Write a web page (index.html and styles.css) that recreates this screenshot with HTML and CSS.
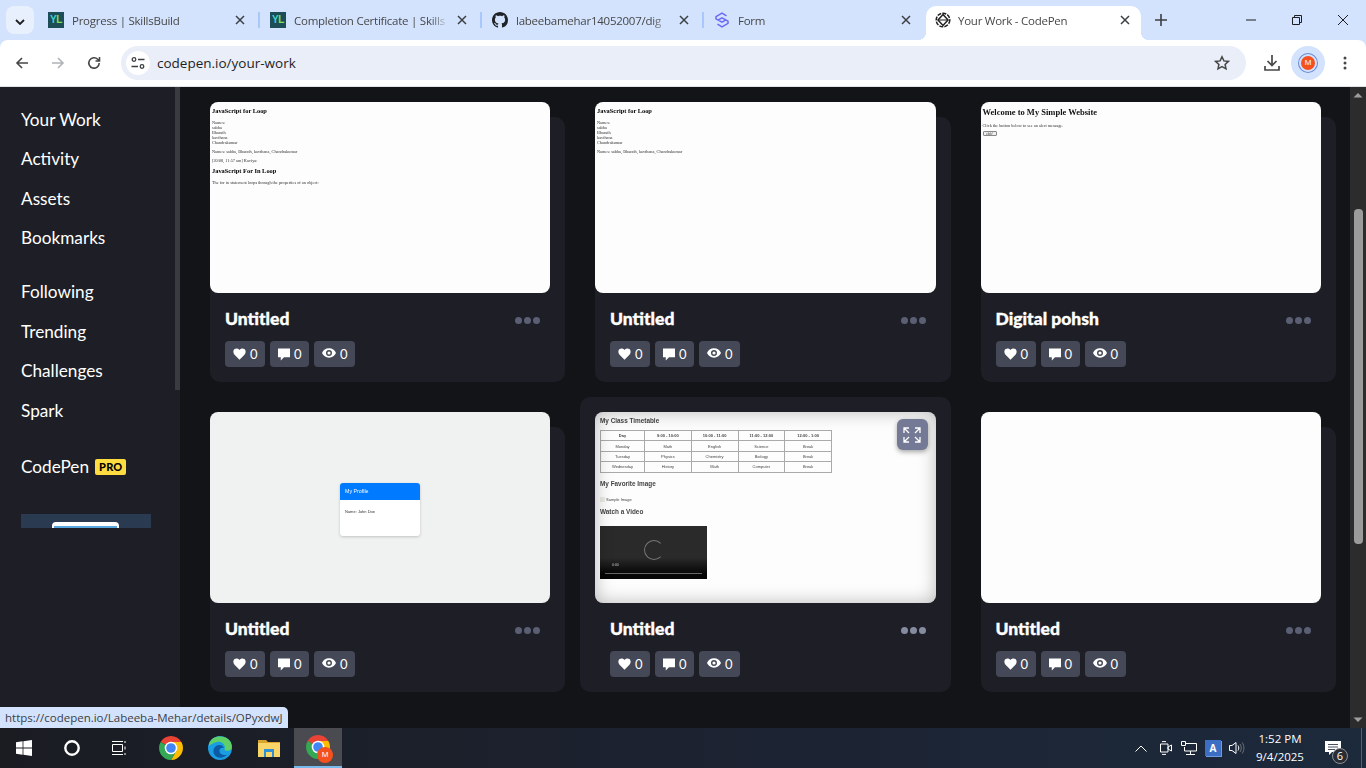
FILE: index.html
```html
<!DOCTYPE html>
<html lang="en">
<head>
    <meta charset="UTF-8">
    <meta name="viewport" content="width=device-width, initial-scale=1.0">
    <title>Your Work - CodePen</title>
    <link rel="stylesheet" href="styles.css">
</head>
<body>
    <svg class="sprites" width="0" height="0">
        <symbol id="i-heart" viewBox="0 0 14 13"><path d="M7 12.6 1.6 7.2C-.2 5.4 0 2.6 1.7 1.2 3.4-.1 5.7.3 7 2.1 8.3.3 10.6-.1 12.3 1.2 14 2.6 14.2 5.4 12.4 7.200z"/></symbol>
        <symbol id="i-comment" viewBox="0 0 13 13"><path d="M0 0h13v9.5H6.500L3 13V9.500H0z"/></symbol>
        <symbol id="i-eye" viewBox="0 0 15 10"><path fill-rule="evenodd" d="M7.5 0C11 0 13.8 2.2 15 5c-1.2 2.8-4 5-7.500 5S1.200 7.800 0 5C1.200 2.200 4 0 7.500 0zm0 1.800a3.200 3.200 0 1 0 0 6.400 3.200 3.200 0 0 0 0-6.400zm0 1.500a1.700 1.700 0 1 1 0 3.400 1.700 1.700 0 0 1 0-3.400z"/></symbol>
        <symbol id="i-close" viewBox="0 0 10 10"><path d="M1 1l8 8M9 1 1 9" fill="none" stroke="currentColor" stroke-width="1.5"/></symbol>
        <symbol id="i-chrome" viewBox="4 4 40 40">
            <path fill="#ea4335" d="M15.34 19 6.68 14a20 20 0 0 1 34.64 0H24z"/>
            <path fill="#fbbc04" d="M24 14h17.32A20 20 0 0 1 24 44l8.66-15z"/>
            <path fill="#34a853" d="M32.66 29 24 44A20 20 0 0 1 6.68 14l8.66 5z"/>
            <circle cx="24" cy="24" r="10.5" fill="#fff"/>
            <circle cx="24" cy="24" r="8" fill="#4285f4"/>
        </symbol>
    </svg>

    <header class="tabstrip">
        <button class="tab-search"><svg width="10" height="6" viewBox="0 0 10 6"><path d="M1 1l4 4 4-4" fill="none" stroke="#1f1f1f" stroke-width="1.8"/></svg></button>
        <div class="tabs">
            <div class="tab">
                <span class="favicon-yl"><b>Y</b><i>L</i></span>
                <span class="tab-title">Progress | SkillsBuild</span>
                <svg class="tab-close"><use href="#i-close"/></svg>
            </div>
            <div class="tab">
                <span class="favicon-yl"><b>Y</b><i>L</i></span>
                <span class="tab-title">Completion Certificate | Skills</span>
                <svg class="tab-close"><use href="#i-close"/></svg>
            </div>
            <div class="tab">
                <svg class="favicon" viewBox="0 0 16 16"><path fill="#1f2328" d="M8 0C3.58 0 0 3.58 0 8c0 3.54 2.29 6.53 5.47 7.59.4.07.55-.17.55-.38 0-.19-.01-.82-.01-1.49-2.01.37-2.53-.49-2.69-.94-.09-.23-.48-.94-.82-1.13-.28-.15-.68-.52-.01-.53.63-.01 1.08.58 1.23.82.72 1.21 1.87.87 2.33.66.07-.52.28-.87.51-1.07-1.78-.2-3.64-.89-3.64-3.95 0-.87.31-1.59.82-2.15-.08-.2-.36-1.02.08-2.12 0 0 .67-.21 2.2.82.64-.18 1.32-.27 2-.27.68 0 1.36.09 2 .27 1.53-1.04 2.2-.82 2.2-.82.44 1.1.16 1.92.08 2.12.51.56.82 1.27.82 2.15 0 3.07-1.87 3.75-3.65 3.95.29.25.54.73.54 1.48 0 1.07-.01 1.93-.01 2.2 0 .21.15.46.55.38A8.013 8.013 0 0 0 16 8c0-4.42-3.58-8-8-8z"/></svg>
                <span class="tab-title">labeebamehar14052007/dig</span>
                <svg class="tab-close"><use href="#i-close"/></svg>
            </div>
            <div class="tab tab-last">
                <svg class="favicon" viewBox="0 0 16 16"><path d="M12.5 3.8 8 1.2 2 4.6v2.200L8 10.200l4-2.300M3.500 12.200 8 14.800l6-3.400V9.200L8 5.800 4 8.100" fill="none" stroke="#6a6af4" stroke-width="1.5"/></svg>
                <span class="tab-title">Form</span>
                <svg class="tab-close"><use href="#i-close"/></svg>
            </div>
            <div class="tab tab-active">
                <svg class="favicon" viewBox="0 0 16 16"><g fill="none" stroke="#1f1f1f" stroke-width="1.5"><circle cx="8" cy="8" r="6.8" stroke-dasharray="4 1.2"/><path d="M8 2.500 13 8l-5 5.500L3 8z"/><path d="M3 8h10" stroke-width="1"/></g></svg>
                <span class="tab-title">Your Work - CodePen</span>
                <svg class="tab-close"><use href="#i-close"/></svg>
            </div>
            <svg class="new-tab" width="12" height="12" viewBox="0 0 12 12"><path d="M6 0v12M0 6h12" stroke="#3c3f43" stroke-width="1.6"/></svg>
        </div>
        <div class="window-controls">
            <svg width="10" height="10" viewBox="0 0 10 10"><path d="M0 5h10" stroke="#1f1f1f"/></svg>
            <svg width="10" height="10" viewBox="0 0 10 10"><path d="M.5 2.500h7v7h-7zM2.500 2.500v-2h7v7h-2" fill="none" stroke="#1f1f1f"/></svg>
            <svg width="10" height="10" viewBox="0 0 10 10"><path d="M0 0l10 10M10 0 0 10" stroke="#1f1f1f"/></svg>
        </div>
    </header>

    <div class="toolbar">
        <svg class="tool-icon" viewBox="0 0 16 16"><path d="M14 8H3M8 3 3 8l5 5" fill="none" stroke="#474747" stroke-width="1.6"/></svg>
        <svg class="tool-icon" viewBox="0 0 16 16"><path d="M2 8h11M8 3l5 5-5 5" fill="none" stroke="#b0b3b8" stroke-width="1.6"/></svg>
        <svg class="tool-icon" viewBox="0 0 16 16"><path d="M13.200 8a5.200 5.200 0 1 1-1.500-3.700L13.500 6M13.500 2v4h-4" fill="none" stroke="#474747" stroke-width="1.6"/></svg>
        <div class="omnibox">
            <span class="site-info"><svg width="14" height="12" viewBox="0 0 14 12"><g fill="none" stroke="#3c3f43" stroke-width="1.3"><circle cx="3" cy="2.500" r="1.8"/><path d="M7 2.500h6.500M.5 9.500H7"/><circle cx="11" cy="9.500" r="1.8"/></g></svg></span>
            <span class="url">codepen.io/your-work</span>
            <svg class="star" width="16" height="16" viewBox="0 0 16 16"><path d="M8 1.800l1.900 4.100 4.500.5-3.300 3 .9 4.400L8 11.600l-4 2.200.9-4.400-3.300-3 4.500-.5z" fill="none" stroke="#474747" stroke-width="1.5"/></svg>
        </div>
        <svg class="download" width="18" height="18" viewBox="0 0 18 18"><path d="M9 1v10M4.500 7 9 11.500 13.500 7M2 12v4h14v-4" fill="none" stroke="#474747" stroke-width="1.7"/></svg>
        <span class="profile"><span class="avatar">M</span></span>
        <svg class="menu" width="4" height="14" viewBox="0 0 4 14"><circle cx="2" cy="2" r="1.5" fill="#474747"/><circle cx="2" cy="7" r="1.5" fill="#474747"/><circle cx="2" cy="12" r="1.5" fill="#474747"/></svg>
    </div>

    <div class="viewport">
        <aside class="sidebar">
            <nav class="side-group">
                <a>Your Work</a>
                <a>Activity</a>
                <a>Assets</a>
                <a>Bookmarks</a>
            </nav>
            <nav class="side-group side-group-wide">
                <a>Following</a>
                <a>Trending</a>
                <a>Challenges</a>
                <a>Spark</a>
            </nav>
            <nav class="side-group">
                <a>CodePen <span class="pro">PRO</span></a>
            </nav>
            <div class="promo"><span class="promo-card"></span></div>
        </aside>

        <main class="content">
            <div class="pen-grid">
                <article class="pen">
                    <div class="screen">
                        <div class="doc serif">
                            <h3>JavaScript for Loop</h3>
                            <p>Names:<br>sabha<br>Bharath<br>kavthana<br>Chandrakumar</p>
                            <p>Names: sabha, Bharath, kavthana, Chandrakumar</p>
                            <p>[20/08, 11:57 am] Kaviya:</p>
                            <h3>JavaScript For In Loop</h3>
                            <p>The for in statement loops through the properties of an object:</p>
                        </div>
                    </div>
                    <div class="pen-info">
                        <div class="pen-head"><h2>Untitled</h2><span class="dots"><i></i><i></i><i></i></span></div>
                        <div class="stats">
                            <span class="stat"><svg class="ic-heart"><use href="#i-heart"/></svg>0</span>
                            <span class="stat"><svg class="ic-comment"><use href="#i-comment"/></svg>0</span>
                            <span class="stat"><svg class="ic-eye"><use href="#i-eye"/></svg>0</span>
                        </div>
                    </div>
                </article>

                <article class="pen">
                    <div class="screen">
                        <div class="doc serif">
                            <h3>JavaScript for Loop</h3>
                            <p>Names:<br>sabha<br>Bharath<br>kavthana<br>Chandrakumar</p>
                            <p>Names: sabha, Bharath, kavthana, Chandrakumar</p>
                        </div>
                    </div>
                    <div class="pen-info">
                        <div class="pen-head"><h2>Untitled</h2><span class="dots"><i></i><i></i><i></i></span></div>
                        <div class="stats">
                            <span class="stat"><svg class="ic-heart"><use href="#i-heart"/></svg>0</span>
                            <span class="stat"><svg class="ic-comment"><use href="#i-comment"/></svg>0</span>
                            <span class="stat"><svg class="ic-eye"><use href="#i-eye"/></svg>0</span>
                        </div>
                    </div>
                </article>

                <article class="pen">
                    <div class="screen">
                        <div class="doc serif">
                            <h1>Welcome to My Simple Website</h1>
                            <p>Click the button below to see an alert message.</p>
                            <span class="fake-btn">click!</span>
                        </div>
                    </div>
                    <div class="pen-info">
                        <div class="pen-head"><h2>Digital pohsh</h2><span class="dots"><i></i><i></i><i></i></span></div>
                        <div class="stats">
                            <span class="stat"><svg class="ic-heart"><use href="#i-heart"/></svg>0</span>
                            <span class="stat"><svg class="ic-comment"><use href="#i-comment"/></svg>0</span>
                            <span class="stat"><svg class="ic-eye"><use href="#i-eye"/></svg>0</span>
                        </div>
                    </div>
                </article>

                <article class="pen">
                    <div class="screen screen-profile">
                        <div class="profile-card">
                            <div class="profile-head">My Profile</div>
                            <div class="profile-body">Name: John Doe</div>
                        </div>
                    </div>
                    <div class="pen-info">
                        <div class="pen-head"><h2>Untitled</h2><span class="dots"><i></i><i></i><i></i></span></div>
                        <div class="stats">
                            <span class="stat"><svg class="ic-heart"><use href="#i-heart"/></svg>0</span>
                            <span class="stat"><svg class="ic-comment"><use href="#i-comment"/></svg>0</span>
                            <span class="stat"><svg class="ic-eye"><use href="#i-eye"/></svg>0</span>
                        </div>
                    </div>
                </article>

                <article class="pen pen-hover">
                    <div class="screen screen-timetable">
                        <div class="timetable-inner">
                            <h4>My Class Timetable</h4>
                            <table>
                                <tr><th>Day</th><th>9:00 - 10:00</th><th>10:00 - 11:00</th><th>11:00 - 12:00</th><th>12:00 - 1:00</th></tr>
                                <tr><td>Monday</td><td>Math</td><td>English</td><td>Science</td><td>Break</td></tr>
                                <tr><td>Tuesday</td><td>Physics</td><td>Chemistry</td><td>Biology</td><td>Break</td></tr>
                                <tr><td>Wednesday</td><td>History</td><td>Math</td><td>Computer</td><td>Break</td></tr>
                            </table>
                            <h4 class="gap-fav">My Favorite Image</h4>
                            <p class="alt-img">Sample Image</p>
                            <h4 class="gap-video">Watch a Video</h4>
                            <div class="video">
                                <span class="spinner"></span>
                                <span class="video-time">0:00</span>
                                <span class="video-bar"></span>
                            </div>
                        </div>
                        <span class="expand">
                            <svg width="18" height="16" viewBox="0 0 18 16"><path d="M1 6V1h5M1 1l5 5M17 6V1h-5M17 1l-5 5M1 10v5h5M1 15l5-5M17 10v5h-5M17 15l-5-5" fill="none" stroke="#fff" stroke-width="1.3"/></svg>
                        </span>
                    </div>
                    <div class="pen-info">
                        <div class="pen-head"><h2>Untitled</h2><span class="dots"><i></i><i></i><i></i></span></div>
                        <div class="stats">
                            <span class="stat"><svg class="ic-heart"><use href="#i-heart"/></svg>0</span>
                            <span class="stat"><svg class="ic-comment"><use href="#i-comment"/></svg>0</span>
                            <span class="stat"><svg class="ic-eye"><use href="#i-eye"/></svg>0</span>
                        </div>
                    </div>
                </article>

                <article class="pen">
                    <div class="screen"></div>
                    <div class="pen-info">
                        <div class="pen-head"><h2>Untitled</h2><span class="dots"><i></i><i></i><i></i></span></div>
                        <div class="stats">
                            <span class="stat"><svg class="ic-heart"><use href="#i-heart"/></svg>0</span>
                            <span class="stat"><svg class="ic-comment"><use href="#i-comment"/></svg>0</span>
                            <span class="stat"><svg class="ic-eye"><use href="#i-eye"/></svg>0</span>
                        </div>
                    </div>
                </article>
            </div>
        </main>

        <div class="scrollbar">
            <svg width="16" height="17" viewBox="0 0 16 17"><path d="M3.5 10.5 8 6l4.500 4.500z" fill="#9d9d9d"/></svg>
            <span class="thumb"></span>
            <svg class="arrow-down" width="16" height="17" viewBox="0 0 16 17"><path d="M3.5 6.5 8 11l4.500-4.500z" fill="#9d9d9d"/></svg>
        </div>

        <div class="status-url">https://codepen.io/Labeeba-Mehar/details/OPyxdwJ</div>
    </div>

    <footer class="taskbar">
        <div class="task-left">
            <span class="task-item"><svg width="16" height="16" viewBox="0 0 16 16"><path fill="#fff" d="M0 2.200 6.600 1.300v6.300H0zM7.400 1.200 16 0v7.600H7.400zM0 8.400h6.600v6.300L0 13.800zM7.400 8.400H16V16l-8.600-1.200z"/></svg></span>
            <span class="task-item"><svg width="16" height="16" viewBox="0 0 16 16"><circle cx="8" cy="8" r="6.700" fill="none" stroke="#fff" stroke-width="2.400"/></svg></span>
            <span class="task-item"><svg width="16" height="16" viewBox="0 0 16 16"><path d="M.5 4.500h10v7H.5zM0 1.500h11M0 14.500h11M13 1v2M13 6.500v3M13 13v2" fill="none" stroke="#fff"/></svg></span>
            <span class="task-item task-app task-first"><svg width="24" height="24"><use href="#i-chrome"/></svg></span>
            <span class="task-item task-app">
                <svg width="24" height="24" viewBox="0 0 24 24">
                    <circle cx="12" cy="12" r="12" fill="#1b9de2"/>
                    <path fill="#5fd068" d="M2 6C5 0 14-1 20 3c3 2 4.500 6 3.500 10-1.500 2-6 2.500-7 .5C18 9 14 5 9 6 6 6.500 3.500 8 1 10c0-1.500.3-3 1-4z"/>
                    <path fill="#0c59a4" d="M9 21c-4-2-5-8-1-11 3-2 7-1 8 2-3-1-5 1-4.500 3.500.5 3 4 4.500 8 3-3 3-7 4-10.500 2.500z"/>
                </svg>
            </span>
            <span class="task-item task-app">
                <svg width="22" height="18" viewBox="0 0 22 18">
                    <path fill="#d9a42b" d="M0 1h8l2 2h12v3H0z"/>
                    <path fill="#f8d568" d="M0 4h22v14H0z"/>
                    <path fill="#2d8fd5" d="M6 10h10v8h-2v-5H8v5H6z"/>
                </svg>
            </span>
            <span class="task-item task-active">
                <svg width="24" height="24"><use href="#i-chrome"/></svg>
                <span class="task-badge">M</span>
            </span>
        </div>
        <div class="tray">
            <span class="tray-icon"><svg width="12" height="7" viewBox="0 0 12 7"><path d="M.5 6.500 6 1l5.500 5.500" fill="none" stroke="#fff"/></svg></span>
            <span class="tray-icon"><svg width="13" height="14" viewBox="0 0 13 14"><path d="M1.500 3h7.500v8H1.500zM9 6l3.500-2v6L9 8zM3 .6h4M3 13.400h4" fill="none" stroke="#fff"/></svg></span>
            <span class="tray-icon"><svg width="16" height="14" viewBox="0 0 16 14"><path d="M4.500 2.500H15.500V10H3.500V6M9.500 10v3M5 13.500h9M.5.500h4v4h-4z" fill="none" stroke="#fff"/></svg></span>
            <span class="tray-icon"><span class="lang">A</span></span>
            <span class="tray-icon"><svg width="16" height="14" viewBox="0 0 16 14"><path d="M.5 4.500h2.500L7 1.500v11l-4-3H.5z" fill="none" stroke="#fff"/><path d="M9 4.500c1 1.500 1 3.500 0 5" fill="none" stroke="#fff"/><path d="M11 3c1.700 2.500 1.700 5.500 0 8M13.200 1.500c2.300 3.500 2.300 7.500 0 11" fill="none" stroke="#6d7178"/></svg></span>
            <div class="clock"><span>1:52 PM</span><span>9/4/2025</span></div>
            <span class="notify">
                <svg width="16" height="15" viewBox="0 0 16 15"><path fill="#fff" d="M0 0h16v11H7l-3 3v-3H0z"/><path d="M3 3.500h10M3 6h10M3 8.500h7" stroke="#1a2230" stroke-width=".8"/></svg>
                <span class="notify-count">6</span>
            </span>
        </div>
    </footer>
</body>
</html>
```

FILE: styles.css
```css
/* page frame */
* {
    box-sizing: border-box;
}

body {
    margin: 0;
    width: 1366px;
    height: 768px;
    display: flex;
    flex-direction: column;
    overflow: hidden;
    font-family: "Lato", sans-serif;
    background-color: #d3e3fd;
}

.sprites {
    position: absolute;
}

/* browser tabs */
.tabstrip {
    height: 40px;
    display: flex;
    background-color: #d3e3fd;
    flex-shrink: 0;
}

.tab-search {
    width: 28px;
    height: 28px;
    margin: 6px 4px 0 6px;
    padding: 0;
    border: none;
    border-radius: 8px;
    background-color: #e9f0fd;
}

.tabs {
    display: flex;
    align-items: flex-end;
    flex: 1;
}

.tab {
    width: 222px;
    height: 34px;
    display: flex;
    align-items: center;
    padding: 0 15px 6px 10px;
    position: relative;
    color: #474747;
    font-family: "Open Sans", sans-serif;
    font-size: 11.5px;
    letter-spacing: -0.25px;
}

.tab::after {
    content: '';
    position: absolute;
    right: 0;
    top: 6px;
    width: 2px;
    height: 16px;
    background-color: #a8c7fa;
}

.tab-last::after {
    display: none;
}

.tab-active {
    width: 215px;
    background-color: #fff;
    border-radius: 10px 10px 0 0;
    padding: 0 11px 6px 9px;
}

/* concave corners at the foot of the open tab */
.tab-active::before,
.tab-active::after {
    content: '';
    position: absolute;
    top: auto;
    bottom: 0;
    width: 8px;
    height: 8px;
    background-color: transparent;
}

.tab-active::before {
    left: -8px;
    background-image: radial-gradient(circle at 0 0, transparent 8px, #fff 8px);
}

.tab-active::after {
    right: -8px;
    background-image: radial-gradient(circle at 100% 0, transparent 8px, #fff 8px);
}

.favicon,
.favicon-yl {
    width: 16px;
    height: 16px;
    flex-shrink: 0;
    margin-right: 8px;
}

.tab-active .favicon {
    margin-right: 7px;
}

.favicon-yl {
    display: flex;
    align-items: center;
    justify-content: center;
    background-color: #1d4e57;
    font-family: "Liberation Sans", sans-serif;
    font-size: 10px;
    line-height: 16px;
    letter-spacing: -0.5px;
}

.favicon-yl b {
    color: #3fd0d4;
}

.favicon-yl i {
    color: #7fe05a;
    font-style: normal;
    font-weight: bold;
}

.tab-title {
    flex: 1;
    overflow: hidden;
    white-space: nowrap;
    -webkit-mask-image: linear-gradient(to right, #000 88%, transparent);
    mask-image: linear-gradient(to right, #000 88%, transparent);
}

.tab-close {
    width: 10px;
    height: 10px;
    margin-left: 8px;
    flex-shrink: 0;
    color: #3c3f43;
}

.new-tab {
    margin: 0 0 14px 14px;
}

.window-controls {
    display: flex;
    align-items: center;
    gap: 36px;
    padding-right: 18px;
}

.window-controls svg {
    display: block;
}

/* browser toolbar */
.toolbar {
    height: 47px;
    display: flex;
    align-items: center;
    flex-shrink: 0;
    padding: 0 0 1px 14px;
    background-color: #fff;
    border-bottom: 1px solid #e2e3e5;
    border-radius: 8px 8px 0 0;
}

.tool-icon {
    width: 16px;
    height: 16px;
    margin-right: 20px;
}

.tool-icon:nth-child(3) {
    margin-right: 19px;
}

.omnibox {
    width: 1125px;
    height: 34px;
    display: flex;
    align-items: center;
    padding: 0 16px 0 5px;
    border-radius: 17px;
    background-color: #e9eef8;
    font-family: "Open Sans", sans-serif;
    font-size: 13.5px;
    color: #1f1f1f;
}

.site-info {
    width: 24px;
    height: 24px;
    margin-right: 7px;
    display: flex;
    align-items: center;
    justify-content: center;
    border-radius: 50%;
    background-color: #fff;
}

.url {
    flex: 1;
}

.download {
    margin-left: 17px;
}

.profile {
    width: 34px;
    height: 34px;
    margin-left: 10px;
    display: flex;
    align-items: center;
    justify-content: center;
    border-radius: 50%;
    background-color: #d3e3fd;
}

.avatar {
    width: 14px;
    height: 14px;
    display: flex;
    align-items: center;
    justify-content: center;
    border-radius: 50%;
    background-color: #f4511e;
    color: #fff;
    font-family: "Liberation Sans", sans-serif;
    font-size: 8px;
    box-shadow: 0 0 0 2px #d3e3fd, 0 0 0 3px #6a8bd0;
}

.menu {
    margin-left: 18px;
}

/* codepen page */
.viewport {
    flex: 1;
    display: flex;
    position: relative;
    min-height: 0;
    background-color: #131417;
}

.sidebar {
    width: 180px;
    flex-shrink: 0;
    padding: 12.6px 0 0 21px;
    background-color: #1e1f26;
    position: relative;
    overflow: hidden;
}

.sidebar::after {
    content: '';
    position: absolute;
    top: 0;
    right: 0;
    width: 5px;
    height: 303px;
    background-color: #3a3b41;
}

.side-group {
    margin-bottom: 15px;
}

.side-group-wide {
    margin-bottom: 17.4px;
}

.side-group a {
    display: flex;
    align-items: center;
    gap: 6px;
    height: 39.4px;
    color: #fff;
    font-size: 17.2px;
}

.pro {
    padding: 0 4px;
    height: 16px;
    line-height: 16px;
    border-radius: 2px;
    background-color: #ffdd40;
    color: #000;
    font-size: 11px;
    font-weight: 900;
    letter-spacing: 0.2px;
}

.promo {
    width: 130px;
    height: 14px;
    margin-top: 27px;
    padding: 8px 0 0 31px;
    overflow: hidden;
    background-color: #2a3a50;
}

.promo-card {
    display: block;
    width: 67px;
    height: 20px;
    border: 2px solid #fff;
    border-top-width: 4px;
    border-radius: 4px 4px 0 0;
    background-color: #5aa5dc;
}

.content {
    flex: 1;
    padding: 15px 0 0 30px;
    overflow: hidden;
}

.pen-grid {
    display: grid;
    grid-template-columns: 355px 355.5px 355px;
    column-gap: 30px;
    row-gap: 30px;
}

.pen {
    margin-top: 15px;
    padding: 0 15px 15px 0;
    border-radius: 10px;
    background-color: #1e1f26;
}

.pen-hover {
    margin: -15px 0 0 -15px;
    padding: 15px;
}

.pen-hover .screen {
    margin-top: 0;
}

.pen-hover .dots i {
    background-color: #868ca0;
}

.screen {
    height: 191px;
    margin-top: -15px;
    position: relative;
    overflow: hidden;
    border-radius: 8px;
    background-color: #fdfdfd;
    color: #111;
}

.doc,
.timetable-inner,
.profile-card {
    filter: blur(0.4px);
}

.serif {
    padding: 4.6px 2px;
    font-family: "Liberation Serif", serif;
    font-size: 4.3px;
    line-height: 5px;
    color: #333;
}

.serif h3 {
    margin: 0 0 5px;
    font-size: 6.4px;
    line-height: 8px;
    color: #000;
}

.serif h1 {
    margin: 0 0 6.5px;
    font-size: 8.5px;
    line-height: 10px;
    color: #111;
}

.serif p {
    margin: 0 0 4.3px;
}

.serif p + h3 {
    margin-top: 1px;
}

.serif h1 + p {
    margin-bottom: 3px;
}

.fake-btn {
    display: block;
    width: 14px;
    height: 5px;
    border: 0.5px solid #888;
    border-radius: 1px;
    background-color: #efefef;
    font-family: "Liberation Sans", sans-serif;
    font-size: 3px;
    line-height: 4px;
    text-align: center;
}

.screen-profile {
    display: flex;
    align-items: center;
    justify-content: center;
    background-color: #f0f2f1;
    font-family: "Liberation Sans", sans-serif;
}

.profile-card {
    width: 80px;
    height: 53px;
    margin-top: 4px;
    overflow: hidden;
    border-radius: 3px;
    background-color: #fff;
    box-shadow: 0 1px 3px rgba(0, 0, 0, 0.2);
}

.profile-head {
    height: 17px;
    padding-left: 5px;
    background-color: #007bff;
    color: #fff;
    font-size: 5.3px;
    line-height: 17px;
}

.profile-body {
    padding: 9px 5px;
    font-size: 4px;
    line-height: 6px;
    color: #333;
}

.screen-timetable {
    font-family: "Liberation Sans", sans-serif;
    color: #444;
}

.screen-timetable::after {
    content: '';
    position: absolute;
    inset: 0;
    box-shadow: inset 0 0 18px rgba(0, 0, 0, 0.28);
    border-radius: 8px;
}

.timetable-inner {
    padding: 5px;
}

.timetable-inner h4 {
    margin: 0;
    font-size: 6.4px;
    line-height: 8px;
}

table {
    width: 232px;
    margin-top: 5px;
    border-collapse: collapse;
    table-layout: fixed;
    font-size: 4px;
    text-align: center;
}

th,
td {
    height: 10.4px;
    padding: 0;
    border: 0.7px solid #aaa;
}

th:first-child {
    width: 44px;
}

.timetable-inner .gap-fav {
    margin-top: 7px;
}

.alt-img {
    margin: 9px 0 0;
    display: flex;
    align-items: center;
    gap: 1px;
    font-size: 4px;
    line-height: 6px;
}

/* broken image marker */
.alt-img::before {
    content: '';
    width: 5px;
    height: 5px;
    background-color: #e8ece4;
}

.timetable-inner .gap-video {
    margin-top: 5px;
}

.video {
    width: 107px;
    height: 53px;
    margin-top: 10px;
    position: relative;
    background: linear-gradient(#2a2a2a 60%, #050505 90%);
}

.spinner {
    position: absolute;
    left: 44px;
    top: 14px;
    width: 20px;
    height: 20px;
    border: 1px solid #777;
    border-right-color: transparent;
    border-radius: 50%;
}

.video-time {
    position: absolute;
    left: 12px;
    top: 37px;
    color: #ccc;
    font-size: 3.5px;
    line-height: 5px;
}

.video-bar {
    position: absolute;
    left: 5px;
    right: 5px;
    top: 47px;
    height: 1px;
    background-color: #666;
}

.expand {
    position: absolute;
    top: 7px;
    right: 8px;
    width: 31px;
    height: 31px;
    display: flex;
    align-items: center;
    justify-content: center;
    border-radius: 6px;
    background-color: #747a95;
    box-shadow: 0 2px 5px rgba(0, 0, 0, 0.35);
    z-index: 1;
}

.pen-info {
    padding: 14px 10px 0 15px;
}

.pen-head {
    display: flex;
    align-items: center;
    justify-content: space-between;
}

.pen-head h2 {
    margin: 0;
    color: #fff;
    font-size: 17.5px;
    font-weight: 900;
    line-height: 24px;
    -webkit-text-stroke: 0.35px #fff;
}

.dots {
    display: flex;
    gap: 2px;
    margin-top: 3px;
}

.dots i {
    width: 7px;
    height: 7px;
    border-radius: 50%;
    background-color: #5a5f73;
}

.stats {
    display: flex;
    gap: 5px;
    margin-top: 10px;
}

.stat {
    height: 26px;
    display: flex;
    align-items: center;
    gap: 4px;
    padding: 0 7.5px 0 8px;
    border-radius: 4px;
    background-color: #444857;
    color: #fff;
    font-size: 13px;
}

.stat svg {
    fill: #fff;
}

.ic-heart {
    width: 13px;
    height: 12px;
}

.ic-comment {
    width: 12px;
    height: 13px;
}

.ic-eye {
    width: 14px;
    height: 10px;
    margin-bottom: 2px;
}

/* page scrollbar */
.scrollbar {
    width: 16px;
    flex-shrink: 0;
    display: flex;
    flex-direction: column;
    align-items: center;
    background-color: #2c2c2c;
}

.scrollbar svg {
    flex-shrink: 0;
}

.thumb {
    width: 9px;
    height: 335px;
    margin-top: 105px;
    border-radius: 4px;
    background-color: #9b9b9b;
}

.arrow-down {
    margin-top: auto;
}

.status-url {
    position: absolute;
    left: 0;
    bottom: 0;
    width: 288px;
    height: 21px;
    padding-left: 5px;
    border-radius: 0 5px 0 0;
    background-color: #d3e3fd;
    color: #3c4043;
    font-family: "Open Sans", sans-serif;
    font-size: 11.5px;
    line-height: 21px;
    white-space: nowrap;
}

/* windows taskbar */
.taskbar {
    height: 40px;
    display: flex;
    justify-content: space-between;
    flex-shrink: 0;
    background: linear-gradient(to right, #1a1c22, #1c2230 50%, #1c2a3c);
}

.task-left {
    display: flex;
}

.task-item {
    width: 48px;
    height: 40px;
    display: flex;
    align-items: center;
    justify-content: center;
    position: relative;
}

.task-app {
    width: 49px;
}

.task-first {
    margin-left: 2.5px;
}

.task-active {
    margin-left: 0.5px;
    background-color: #4a4b50;
    border-bottom: 2px solid #76b9ed;
}

.task-badge {
    position: absolute;
    left: 23px;
    top: 19px;
    width: 16px;
    height: 16px;
    border-radius: 50%;
    background-color: #f4511e;
    color: #fff;
    font-family: "Liberation Sans", sans-serif;
    font-size: 8px;
    line-height: 16px;
    text-align: center;
}

.tray {
    height: 40px;
    display: flex;
    align-items: center;
    margin-right: 4px;
    padding-right: 6px;
    border-right: 1px solid #55606e;
    color: #fff;
    font-family: "Open Sans", sans-serif;
}

.tray-icon {
    width: 24px;
    display: flex;
    align-items: center;
    justify-content: center;
}

.lang {
    width: 16px;
    height: 16px;
    background-color: #3c6fc4;
    box-shadow: 1px 1px 0 #6f9be0;
    font-size: 10px;
    font-weight: 700;
    line-height: 16px;
    text-align: center;
}

.clock {
    width: 62px;
    margin-top: -2px;
    display: flex;
    flex-direction: column;
    align-items: center;
    gap: 3px;
    font-size: 11.5px;
    line-height: 15px;
}

.notify {
    width: 44px;
    display: flex;
    justify-content: center;
    position: relative;
}

.notify-count {
    position: absolute;
    left: 21px;
    top: 7px;
    width: 16px;
    height: 16px;
    border: 1px solid #8d8f94;
    border-radius: 50%;
    background-color: #2a2d33;
    font-size: 11px;
    line-height: 14px;
    text-align: center;
}
```
